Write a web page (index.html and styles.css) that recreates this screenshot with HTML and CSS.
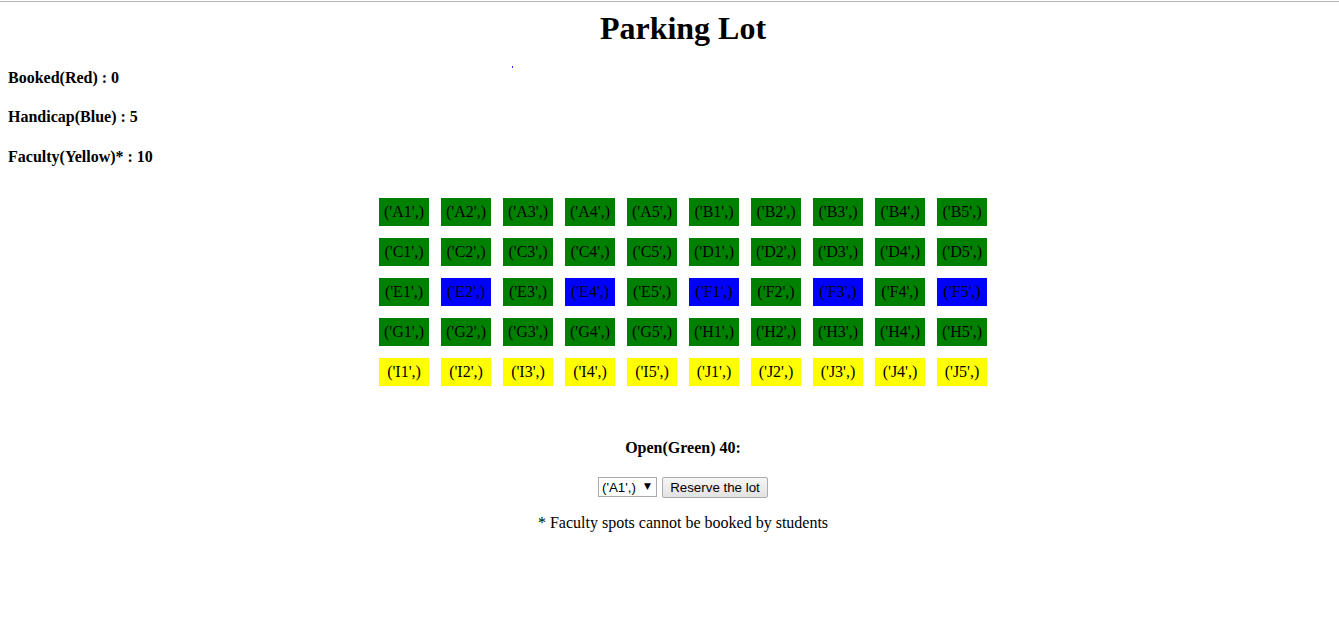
FILE: index.html
```html
<!DOCTYPE html>
<html>
<head>
<meta charset="utf-8">
<title>Parking Lot</title>
<link rel="stylesheet" href="styles.css">
</head>
<body>
<div class="topline"></div>
<div class="page">
  <h1 class="title">Parking Lot</h1>
  <span class="dot"></span>
  <h4 class="stat">Booked(Red) : 0</h4>
  <h4 class="stat">Handicap(Blue) : 5</h4>
  <h4 class="stat">Faculty(Yellow)* : 10</h4>

  <div class="lot">
    <div class="spot open">('A1',)</div><div class="spot open">('A2',)</div><div class="spot open">('A3',)</div><div class="spot open">('A4',)</div><div class="spot open">('A5',)</div><div class="spot open">('B1',)</div><div class="spot open">('B2',)</div><div class="spot open">('B3',)</div><div class="spot open">('B4',)</div><div class="spot open">('B5',)</div>
    <div class="spot open">('C1',)</div><div class="spot open">('C2',)</div><div class="spot open">('C3',)</div><div class="spot open">('C4',)</div><div class="spot open">('C5',)</div><div class="spot open">('D1',)</div><div class="spot open">('D2',)</div><div class="spot open">('D3',)</div><div class="spot open">('D4',)</div><div class="spot open">('D5',)</div>
    <div class="spot open">('E1',)</div><div class="spot handicap">('E2',)</div><div class="spot open">('E3',)</div><div class="spot handicap">('E4',)</div><div class="spot open">('E5',)</div><div class="spot handicap">('F1',)</div><div class="spot open">('F2',)</div><div class="spot handicap">('F3',)</div><div class="spot open">('F4',)</div><div class="spot handicap">('F5',)</div>
    <div class="spot open">('G1',)</div><div class="spot open">('G2',)</div><div class="spot open">('G3',)</div><div class="spot open">('G4',)</div><div class="spot open">('G5',)</div><div class="spot open">('H1',)</div><div class="spot open">('H2',)</div><div class="spot open">('H3',)</div><div class="spot open">('H4',)</div><div class="spot open">('H5',)</div>
    <div class="spot faculty">('I1',)</div><div class="spot faculty">('I2',)</div><div class="spot faculty">('I3',)</div><div class="spot faculty">('I4',)</div><div class="spot faculty">('I5',)</div><div class="spot faculty">('J1',)</div><div class="spot faculty">('J2',)</div><div class="spot faculty">('J3',)</div><div class="spot faculty">('J4',)</div><div class="spot faculty">('J5',)</div>
  </div>

  <h4 class="open-count">Open(Green) 40:</h4>
  <form class="reserve">
    <span class="select-wrap">
      <select class="select">
        <option>('A1',)</option>
      </select>
    </span>
    <button type="button" class="btn">Reserve the lot</button>
  </form>
  <p class="note">* Faculty spots cannot be booked by students</p>
</div>
</body>
</html>
```

FILE: styles.css
```css
html {
  overflow: hidden;
}
body {
  margin: 0;
  font-family: "Liberation Serif", "Times New Roman", serif;
  font-size: 16px;
  color: #000;
  background: #fff;
}
.topline {
  margin-top: 1px;
  height: 1px;
  background: #b9b9b9;
}
.page {
  position: relative;
  width: 1350px;
  padding: 0 8px;
}
.title {
  margin: 8px 0 0;
  font-size: 32px;
  font-weight: bold;
  text-align: center;
}
.dot {
  position: absolute;
  left: 512px;
  top: 56px;
  width: 1px;
  height: 2px;
  background: #3030ff;
}
.stat {
  margin: 21.3px 0;
  font-size: 16px;
  font-weight: bold;
}
.stat:first-of-type {
  margin-top: 22px;
}
.lot {
  margin: 32px auto 0;
  width: 608px;
  display: grid;
  grid-template-columns: repeat(10, 50px);
  grid-auto-rows: 28px;
  gap: 12px;
}
.spot {
  display: flex;
  align-items: center;
  justify-content: center;
  font-size: 16px;
  color: #000;
}
.open { background: #008000; }
.handicap { background: #0000ff; }
.faculty { background: #ffff00; }
.open-count {
  margin: 53px 0 0;
  text-align: center;
  font-size: 16px;
  font-weight: bold;
}
.reserve {
  margin-top: 20px;
  display: flex;
  justify-content: center;
  align-items: center;
  gap: 5px;
}
.select-wrap {
  position: relative;
  display: inline-block;
}
.select {
  appearance: none;
  -webkit-appearance: none;
  width: 59px;
  height: 20px;
  padding: 0 0 0 3px;
  border: 1px solid #a9a9a9;
  border-radius: 0;
  background: #fff;
  font-family: "Liberation Sans", Arial, sans-serif;
  font-size: 13.33px;
  color: #000;
}
.select-wrap::after {
  content: "\25BC";
  position: absolute;
  right: 6px;
  top: 4px;
  font-family: "DejaVu Sans", sans-serif;
  font-size: 9px;
  color: #000;
  pointer-events: none;
}
.btn {
  height: 21px;
  width: 106px;
  padding: 0;
  border: 1px solid #adadad;
  border-radius: 2px;
  background: linear-gradient(#f6f6f6, #e2e2e2);
  font-family: "Liberation Sans", Arial, sans-serif;
  font-size: 13.33px;
  color: #000;
}
.note {
  margin: 16px 0 0;
  text-align: center;
  font-size: 16px;
}
```
